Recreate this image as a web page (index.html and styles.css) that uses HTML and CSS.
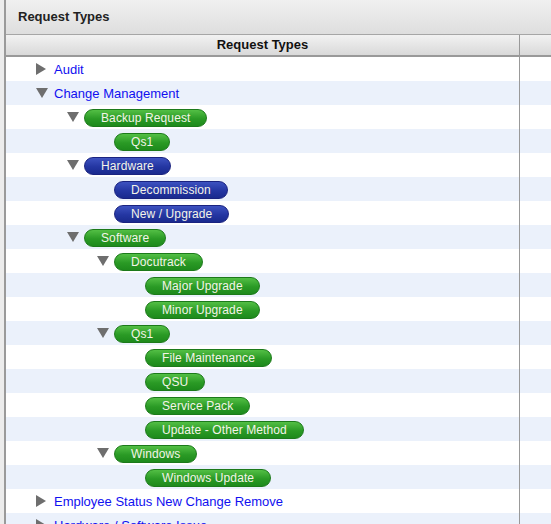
FILE: index.html
```html
<!DOCTYPE html>
<html lang="en">
<head>
    <meta charset="UTF-8">
    <title>Request Types</title>
    <link rel="stylesheet" href="styles.css">
</head>
<body>
    <div class="panel">
        <div class="panel-title">Request Types</div>
        <div class="grid-head">
            <div class="head-cell">Request Types</div>
            <div class="head-rest"></div>
        </div>
        <div class="grid-body">
            <div class="row"><div class="cell lvl0"><span class="tw closed"></span><a class="link">Audit</a></div><div class="rest"></div></div>
            <div class="row alt"><div class="cell lvl0"><span class="tw open"></span><a class="link">Change Management</a></div><div class="rest"></div></div>
            <div class="row"><div class="cell lvl1"><span class="tw open"></span><span class="pill green">Backup Request</span></div><div class="rest"></div></div>
            <div class="row alt"><div class="cell lvl2"><span class="tw"></span><span class="pill green">Qs1</span></div><div class="rest"></div></div>
            <div class="row"><div class="cell lvl1"><span class="tw open"></span><span class="pill blue">Hardware</span></div><div class="rest"></div></div>
            <div class="row alt"><div class="cell lvl2"><span class="tw"></span><span class="pill blue">Decommission</span></div><div class="rest"></div></div>
            <div class="row"><div class="cell lvl2"><span class="tw"></span><span class="pill blue">New / Upgrade</span></div><div class="rest"></div></div>
            <div class="row alt"><div class="cell lvl1"><span class="tw open"></span><span class="pill green">Software</span></div><div class="rest"></div></div>
            <div class="row"><div class="cell lvl2"><span class="tw open"></span><span class="pill green">Docutrack</span></div><div class="rest"></div></div>
            <div class="row alt"><div class="cell lvl3"><span class="tw"></span><span class="pill green">Major Upgrade</span></div><div class="rest"></div></div>
            <div class="row"><div class="cell lvl3"><span class="tw"></span><span class="pill green">Minor Upgrade</span></div><div class="rest"></div></div>
            <div class="row alt"><div class="cell lvl2"><span class="tw open"></span><span class="pill green">Qs1</span></div><div class="rest"></div></div>
            <div class="row"><div class="cell lvl3"><span class="tw"></span><span class="pill green">File Maintenance</span></div><div class="rest"></div></div>
            <div class="row alt"><div class="cell lvl3"><span class="tw"></span><span class="pill green">QSU</span></div><div class="rest"></div></div>
            <div class="row"><div class="cell lvl3"><span class="tw"></span><span class="pill green">Service Pack</span></div><div class="rest"></div></div>
            <div class="row alt"><div class="cell lvl3"><span class="tw"></span><span class="pill green">Update - Other Method</span></div><div class="rest"></div></div>
            <div class="row"><div class="cell lvl2"><span class="tw open"></span><span class="pill green">Windows</span></div><div class="rest"></div></div>
            <div class="row alt"><div class="cell lvl3"><span class="tw"></span><span class="pill green">Windows Update</span></div><div class="rest"></div></div>
            <div class="row"><div class="cell lvl0"><span class="tw closed"></span><a class="link">Employee Status New Change Remove</a></div><div class="rest"></div></div>
            <div class="row alt"><div class="cell lvl0"><span class="tw closed"></span><a class="link">Hardware / Software Issue</a></div><div class="rest"></div></div>
        </div>
    </div>
</body>
</html>
```

FILE: styles.css
```css
body {
    margin: 0;
    background-color: #ececec;
    font-family: "Liberation Sans", Arial, sans-serif;
    font-size: 12px;
    overflow: hidden;
}
.panel {
    margin-left: 4px;
    border-left: 2px solid #9a9a9a;
    background-color: #ffffff;
    min-height: 524px;
}
.panel-title {
    height: 35px;
    line-height: 33px;
    padding-left: 12px;
    font-size: 13px;
    font-weight: bold;
    color: #222;
    background: linear-gradient(#f0f0f0, #dedede);
    border-bottom: 1px solid #a6a6a6;
    box-sizing: border-box;
}
.grid-head {
    display: flex;
    height: 22px;
    background: linear-gradient(#f2f2f2, #d9d9d9);
    border-bottom: 2px solid #999;
    box-sizing: border-box;
}
.head-cell {
    width: 514px;
    border-right: 1px solid #999;
    box-sizing: border-box;
    text-align: center;
    font-weight: bold;
    font-size: 13px;
    line-height: 20px;
    color: #111;
}
.head-rest {
    flex: 1;
}
.row {
    display: flex;
    height: 24px;
    background-color: #ffffff;
}
.row.alt {
    background-color: #ebf1fb;
}
.cell {
    width: 514px;
    border-right: 1px solid #999;
    display: flex;
    align-items: center;
    box-sizing: border-box;
}
.rest {
    flex: 1;
}
.lvl0 { padding-left: 30px; }
.lvl1 { padding-left: 61px; }
.lvl2 { padding-left: 91px; }
.lvl3 { padding-left: 122px; }
.tw {
    width: 18px;
    height: 12px;
    flex: none;
    position: relative;
}
.tw.closed::before {
    content: "";
    position: absolute;
    left: 0;
    top: 0;
    border-top: 6px solid transparent;
    border-bottom: 6px solid transparent;
    border-left: 10px solid #6e6e6e;
}
.tw.open::before {
    content: "";
    position: absolute;
    left: 0;
    top: 1px;
    border-left: 6px solid transparent;
    border-right: 6px solid transparent;
    border-top: 10px solid #6e6e6e;
}
.link {
    color: #1010f0;
    font-size: 13px;
    cursor: pointer;
}
.pill {
    display: inline-block;
    height: 18px;
    line-height: 16px;
    padding: 0 16px;
    margin-top: 2px;
    border-radius: 9px;
    color: #f4f4e8;
    font-size: 12px;
    letter-spacing: 0.1px;
    box-sizing: border-box;
    margin-left: -1px;
}
.pill.green {
    background: linear-gradient(#53bf45, #2a9a25 55%, #1e8a1c);
    border: 1px solid #1c7a1a;
}
.pill.blue {
    background: linear-gradient(#3d52c0, #2436a2 55%, #1a2a8e);
    border: 1px solid #1a2380;
}
```
